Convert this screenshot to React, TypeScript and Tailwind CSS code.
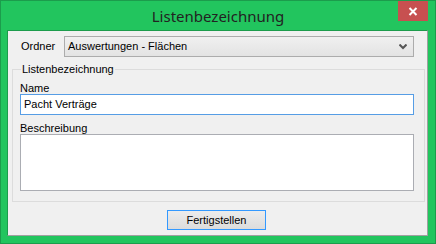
import React from "react";

export default function App() {
  const body = { fontFamily: '"Liberation Sans", Arial, sans-serif' };
  return (
    <div
      className="w-[436px] h-[244px] bg-[#22c55e] border border-[#1c9c4c] flex flex-col"
      style={body}
    >
      {/* title bar */}
      <div className="relative h-[29px] flex items-center justify-center shrink-0">
        <span
          className="text-[15px] text-[#222] leading-none mt-[1px]"
          style={{ fontFamily: '"Noto Sans", "Open Sans", sans-serif' }}
        >
          Listenbezeichnung
        </span>
        <div className="absolute right-[7px] top-0 w-[30px] h-[20px] bg-[#c75050] flex items-center justify-center">
          <svg width="10" height="9" viewBox="0 0 10 9">
            <path d="M1.5 1 L8.5 8 M8.5 1 L1.5 8" stroke="#fff" strokeWidth="2" />
          </svg>
        </div>
      </div>

      {/* client area */}
      <div className="ml-[6px] w-[421px] h-[206px] border-l border-t border-[#1c9c4c] border-r-[#a0a0a0] border-b-[#a0a0a0] border-r border-b bg-[#f0f0f0] flex flex-col">
        {/* Ordner row */}
        <div className="flex items-center mt-[5px] pl-[13px] pr-[13px]">
          <span className="w-[43px] text-[11px] text-black leading-none">Ordner</span>
          <div className="w-[350px] h-[21px] border border-[#acacac] bg-gradient-to-b from-[#f0f0f0] to-[#e3e3e3] flex items-center pl-[3px] pr-[6px]">
            <span className="flex-1 text-[11px] text-black leading-none">Auswertungen - Flächen</span>
            <svg width="8" height="6" viewBox="0 0 8 6">
              <path d="M0.5 0.5 L4 4 L7.5 0.5" stroke="#555" strokeWidth="2" fill="none" />
            </svg>
          </div>
        </div>

        {/* group box */}
        <div className="relative ml-[4px] mr-[2px] mt-[12px] h-[133px] border border-[#dcdcdc] flex flex-col px-[7px]">
          <span className="absolute left-[8px] top-[-7px] bg-[#f0f0f0] px-[1px] text-[11px] text-black leading-[13px]">
            Listenbezeichnung
          </span>
          <span className="mt-[12px] text-[11px] text-black leading-[12px]">Name</span>
          <div className="mt-[0px] w-[394px] h-[21px] border border-[#569de5] bg-white flex items-center pl-[3px]">
            <span className="text-[11px] text-black leading-none">Pacht Verträge</span>
          </div>
          <span className="mt-[7px] text-[11px] text-black leading-[12px]">Beschreibung</span>
          <div className="w-[394px] h-[57px] border border-[#abadb3] bg-white" />
        </div>

        {/* button */}
        <div className="flex justify-center mt-[8px] pr-[2px]">
          <div className="w-[99px] h-[20px] border border-[#3399ff] bg-gradient-to-b from-[#ececec] to-[#dcdcdc] flex items-center justify-center">
            <span className="text-[11px] text-black leading-none">Fertigstellen</span>
          </div>
        </div>
      </div>
    </div>
  );
}
